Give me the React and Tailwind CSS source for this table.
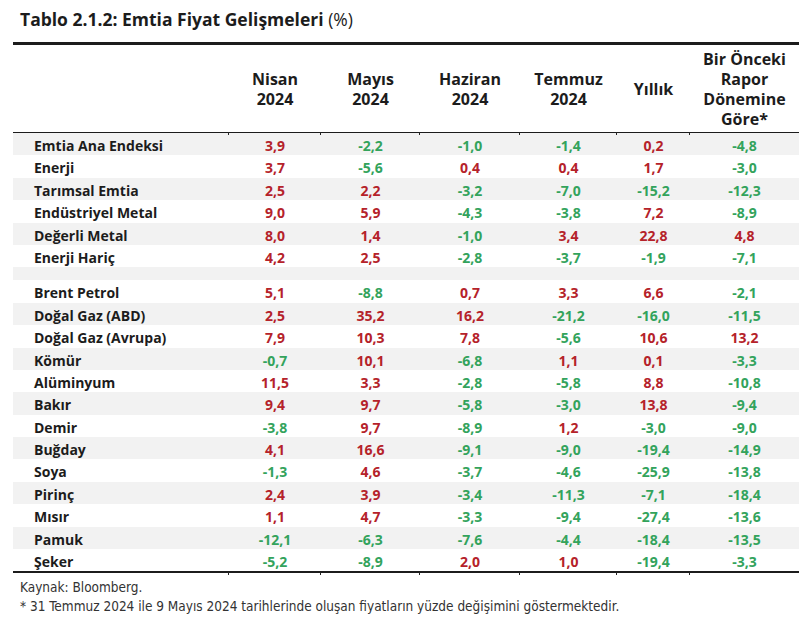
import React from 'react'

const rows = [
  ['Emtia Ana Endeksi', '3,9', '-2,2', '-1,0', '-1,4', '0,2', '-4,8'],
  ['Enerji', '3,7', '-5,6', '0,4', '0,4', '1,7', '-3,0'],
  ['Tarımsal Emtia', '2,5', '2,2', '-3,2', '-7,0', '-15,2', '-12,3'],
  ['Endüstriyel Metal', '9,0', '5,9', '-4,3', '-3,8', '7,2', '-8,9'],
  ['Değerli Metal', '8,0', '1,4', '-1,0', '3,4', '22,8', '4,8'],
  ['Enerji Hariç', '4,2', '2,5', '-2,8', '-3,7', '-1,9', '-7,1'],
  null,
  ['Brent Petrol', '5,1', '-8,8', '0,7', '3,3', '6,6', '-2,1'],
  ['Doğal Gaz (ABD)', '2,5', '35,2', '16,2', '-21,2', '-16,0', '-11,5'],
  ['Doğal Gaz (Avrupa)', '7,9', '10,3', '7,8', '-5,6', '10,6', '13,2'],
  ['Kömür', '-0,7', '10,1', '-6,8', '1,1', '0,1', '-3,3'],
  ['Alüminyum', '11,5', '3,3', '-2,8', '-5,8', '8,8', '-10,8'],
  ['Bakır', '9,4', '9,7', '-5,8', '-3,0', '13,8', '-9,4'],
  ['Demir', '-3,8', '9,7', '-8,9', '1,2', '-3,0', '-9,0'],
  ['Buğday', '4,1', '16,6', '-9,1', '-9,0', '-19,4', '-14,9'],
  ['Soya', '-1,3', '4,6', '-3,7', '-4,6', '-25,9', '-13,8'],
  ['Pirinç', '2,4', '3,9', '-3,4', '-11,3', '-7,1', '-18,4'],
  ['Mısır', '1,1', '4,7', '-3,3', '-9,4', '-27,4', '-13,6'],
  ['Pamuk', '-12,1', '-6,3', '-7,6', '-4,4', '-18,4', '-13,5'],
  ['Şeker', '-5,2', '-8,9', '2,0', '1,0', '-19,4', '-3,3'],
]

const cols = 'grid grid-cols-[216px_92px_99px_100px_97px_73px_109px]'

const Tick = () => <div className="absolute -bottom-[3px] right-0 h-[3px] w-px bg-[#222]" />

const Cell = ({ v }) => (
  <div className={`text-center ${v.startsWith('-') ? 'text-[#33a35c]' : 'text-[#b5222a]'}`}>{v}</div>
)

export default function App() {
  return (
    <div className="w-[808px] h-[625px] bg-white text-[#1c1c1c]" style={{ fontFamily: '"Open Sans", sans-serif' }}>
      <div className="pl-[20px] pt-[7px] h-[42px] text-[17.5px] font-bold leading-[24px]">
        Tablo 2.1.2: Emtia Fiyat Gelişmeleri <span className="font-normal">(%)</span>
      </div>

      <div className="ml-[13px] w-[786px]">
        <div className={`${cols} border-t-[3px] border-b-[1.5px] border-[#1c1c1c] h-[91px] items-center text-[16px] font-bold leading-[20px]`}>
          <div className="relative h-full"><Tick /></div>
          <div className="relative h-full flex items-center justify-center text-center">Nisan<br />2024<Tick /></div>
          <div className="relative h-full flex items-center justify-center text-center">Mayıs<br />2024<Tick /></div>
          <div className="relative h-full flex items-center justify-center text-center">Haziran<br />2024<Tick /></div>
          <div className="relative h-full flex items-center justify-center text-center">Temmuz<br />2024<Tick /></div>
          <div className="relative h-full flex items-center justify-center text-center">Yıllık<Tick /></div>
          <div className="relative h-full flex items-center justify-center text-center">Bir Önceki<br />Rapor<br />Dönemine<br />Göre*</div>
        </div>

        <div className="text-[14px] font-bold">
          {rows.map((r, i) =>
            r === null ? (
              <div key={i} className="h-[13px] bg-[#f2f2f2]" />
            ) : (
              <div key={i} className={`${cols} h-[22.4px] items-center pt-[2px] ${i % 2 === 0 ? 'bg-[#f2f2f2]' : 'bg-white'}`}>
                <div className="pl-[21px]">{r[0]}</div>
                {r.slice(1).map((v, j) => <Cell key={j} v={v} />)}
              </div>
            )
          )}
        </div>

        <div className={`${cols} border-t-[2px] border-[#1c1c1c]`}>
          {[0, 1, 2, 3, 4, 5].map((k) => <div key={k} className="relative h-px"><div className="absolute -top-[1px] right-0 h-[3px] w-px bg-[#222]" /></div>)}
          <div />
        </div>
      </div>

      <div className="pl-[20px] pt-[4px] text-[13.5px] leading-[19px] text-[#333]" style={{ fontFamily: '"Liberation Sans Narrow", "DejaVu Sans Condensed", sans-serif' }}>
        <div>Kaynak: Bloomberg.</div>
        <div>* 31 Temmuz 2024 ile 9 Mayıs 2024 tarihlerinde oluşan fiyatların yüzde değişimini göstermektedir.</div>
      </div>
    </div>
  )
}
